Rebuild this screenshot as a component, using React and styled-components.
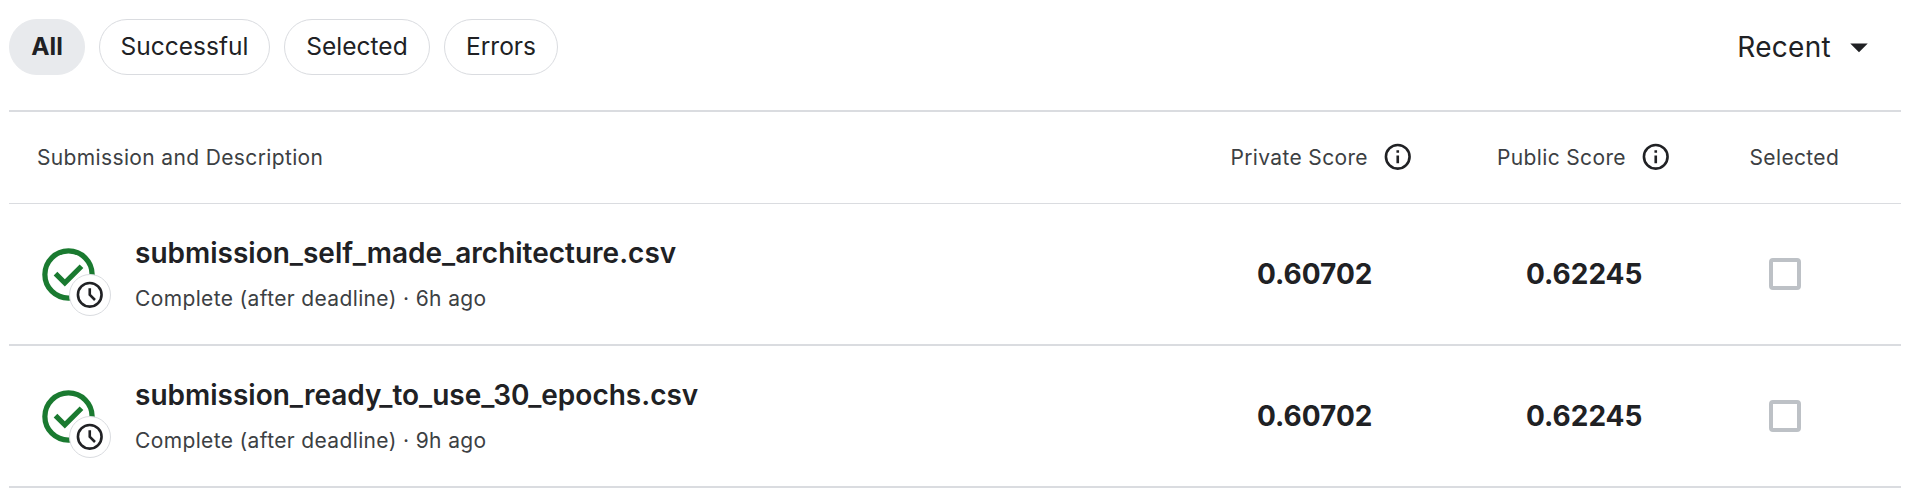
import React from "react";
import styled, { createGlobalStyle } from "styled-components";

const GlobalStyle = createGlobalStyle`
  * { box-sizing: border-box; }
  body {
    margin: 0;
    background: #fff;
    color: #202124;
    font-family: Inter, "Liberation Sans", sans-serif;
  }
`;

const Page = styled.main`
  width: 1892px;
  margin-left: 9px;
`;

const Toolbar = styled.header`
  display: flex;
  justify-content: space-between;
  height: 110px;
  padding-top: 19px;
`;

const Chips = styled.div`
  display: flex;
  gap: 14px;
`;

const Chip = styled.button`
  width: ${(p) => p.$width}px;
  height: 56px;
  padding: 0 0 2px;
  border: 1px solid ${(p) => (p.$active ? "#e8eaed" : "#dadce0")};
  border-radius: 28px;
  background: ${(p) => (p.$active ? "#e8eaed" : "#fff")};
  color: #202124;
  font-family: inherit;
  font-size: 24.5px;
  font-weight: ${(p) => (p.$active ? 700 : 400)};
  line-height: 35px;
`;

const Sort = styled.div`
  display: flex;
  align-items: center;
  gap: 7px;
  height: 56px;
  padding-right: 21px;
  font-size: 28px;
  letter-spacing: 0.3px;
  white-space: nowrap;
`;

const Grid = styled.div`
  display: grid;
  grid-template-columns: 1fr 267px 252px 152px;
  align-items: center;
`;

const HeadRow = styled(Grid)`
  height: 94px;
  border-top: 2px solid #dadce0;
  border-bottom: 1px solid #dadce0;
  color: #3c4043;
  font-size: 21px;
  letter-spacing: 0.36px;
  line-height: 28px;
`;

const HeadCell = styled.div`
  display: flex;
  align-items: center;
  gap: 14.5px;
  padding-left: ${(p) => p.$inset || 0}px;
  white-space: nowrap;

  svg {
    margin-bottom: 2px;
    color: #202124;
  }
`;

const Row = styled(Grid)`
  height: 142px;
  border-bottom: 2px solid #dadce0;
`;

const Submission = styled.div`
  display: flex;
  align-items: center;
  gap: 35px;
  padding-left: 28px;
`;

const Status = styled.div`
  position: relative;
  width: 63px;
  height: 63px;

  svg { display: block; }
`;

const Badge = styled.span`
  position: absolute;
  left: 32px;
  top: 31px;
  display: flex;
  align-items: center;
  justify-content: center;
  width: 42px;
  height: 42px;
  border: 1px solid #dadce0;
  border-radius: 50%;
  background: #fff;
`;

const FileName = styled.div`
  font-size: 28px;
  font-weight: 600;
  line-height: 42px;
`;

const Detail = styled.div`
  margin-top: 7px;
  color: #3c4043;
  font-size: 21px;
  letter-spacing: 0.36px;
  line-height: 35px;
`;

const Score = styled.div`
  padding-left: ${(p) => p.$inset}px;
  font-size: 28px;
  font-weight: 700;
  line-height: 42px;
`;

const CheckBox = styled.div`
  width: 32px;
  height: 32px;
  margin-left: 20px;
  border: 4px solid #bdc1c6;
  border-radius: 4px;
`;

const RingIcon = ({ size, color = "#202124", children }) => (
  <svg width={size} height={size} viewBox="0 0 24 24" fill={color}>
    <circle cx="12" cy="12" r="9" fill="none" stroke={color} strokeWidth="2" />
    {children}
  </svg>
);

const InfoIcon = () => (
  <RingIcon size={31.5}>
    <path d="M11 17h2v-6h-2v6ZM11 7h2v2h-2Z" />
  </RingIcon>
);

const CheckIcon = () => (
  <RingIcon size={63} color="#1a7a30">
    <path d="m10.6 16.6 7.05-7.05-1.4-1.4-5.65 5.65-2.85-2.85-1.4 1.4Z" />
  </RingIcon>
);

const ClockIcon = () => (
  <RingIcon size={31.5}>
    <path d="m15.3 16.7 1.4-1.4-3.7-3.7V7h-2v5.4Z" />
  </RingIcon>
);

const ArrowIcon = () => (
  <svg width="42" height="42" viewBox="0 0 24 24" fill="#202124">
    <path d="m7 10 5 5 5-5Z" />
  </svg>
);

const filters = [
  { label: "All", width: 76, active: true },
  { label: "Successful", width: 171 },
  { label: "Selected", width: 146 },
  { label: "Errors", width: 114 },
];

const submissions = [
  { name: "submission_self_made_architecture.csv", age: "6h ago", priv: "0.60702", pub: "0.62245" },
  { name: "submission_ready_to_use_30_epochs.csv", age: "9h ago", priv: "0.60702", pub: "0.62245" },
];

export default function App() {
  return (
    <>
      <GlobalStyle />
      <Page>
        <Toolbar>
          <Chips>
            {filters.map((f) => (
              <Chip key={f.label} $width={f.width} $active={f.active}>
                {f.label}
              </Chip>
            ))}
          </Chips>
          <Sort>
            Recent
            <ArrowIcon />
          </Sort>
        </Toolbar>
        <HeadRow>
          <HeadCell $inset={28}>Submission and Description</HeadCell>
          <HeadCell $inset={0.4}>Private Score <InfoIcon /></HeadCell>
          <HeadCell>Public Score <InfoIcon /></HeadCell>
          <HeadCell $inset={0.5}>Selected</HeadCell>
        </HeadRow>
        {submissions.map((s) => (
          <Row key={s.name}>
            <Submission>
              <Status>
                <CheckIcon />
                <Badge><ClockIcon /></Badge>
              </Status>
              <div>
                <FileName>{s.name}</FileName>
                <Detail>Complete (after deadline) · {s.age}</Detail>
              </div>
            </Submission>
            <Score $inset={27}>{s.priv}</Score>
            <Score $inset={29}>{s.pub}</Score>
            <CheckBox />
          </Row>
        ))}
      </Page>
    </>
  );
}
